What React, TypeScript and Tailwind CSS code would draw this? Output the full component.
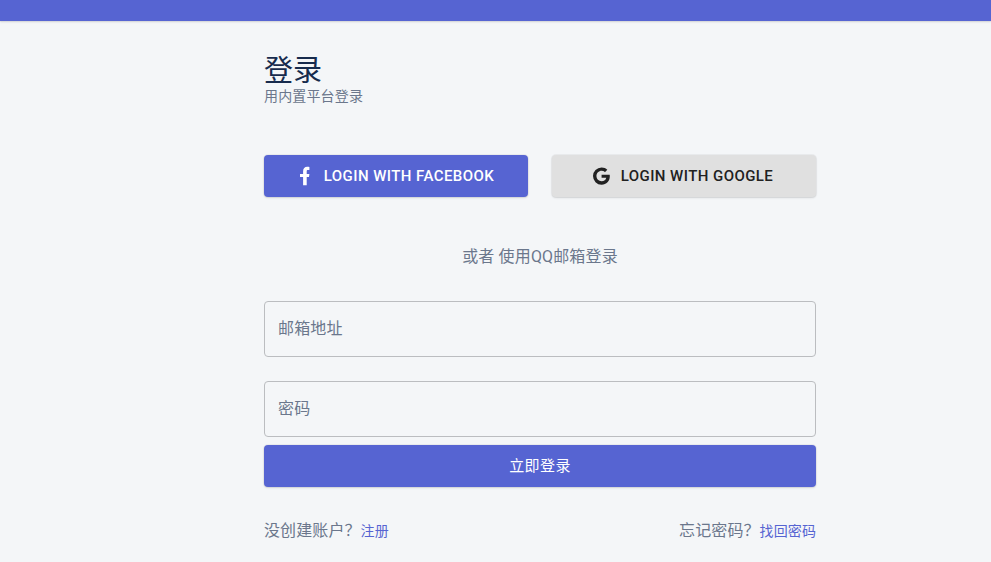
import React from "react";

function FacebookIcon() {
  return (
    <svg viewBox="0 0 24 24" className="h-6 w-6 fill-current">
      <path d="M17.4 3v3.1h-1.3c-1.1 0-1.4.5-1.4 1.4V9.900h2.7l-.4 3.100h-2.300V21.200h-3.600V13H8V9.900h3.100V7.200C11.100 4.400 12.700 2.800 15.200 2.800c.9 0 1.700.1 2.200.2z" />
    </svg>
  );
}

function GoogleIcon() {
  return (
    <svg viewBox="0 0 24 24" className="h-6 w-6 fill-current">
      <path d="M20.66 10.7c.1.5.15 1.02.15 1.56 0 4.9-3.28 8.38-8.23 8.38A8.57 8.57 0 0 1 4 12.07a8.57 8.57 0 0 1 8.58-8.57c2.31 0 4.25.85 5.73 2.23l-2.42 2.42v-.06c-.9-.86-2.04-1.3-3.31-1.3-2.83 0-5.13 2.39-5.13 5.22s2.3 5.23 5.13 5.23c2.56 0 4.31-1.47 4.67-3.49h-4.67V10.7h8.08z" />
    </svg>
  );
}

function Field({ label }: { label: string }) {
  return (
    <div className="flex h-14 items-center rounded-[4px] border border-[#bbbdc0] px-[13px] text-base tracking-[0.15px] text-[#6b778c]">
      {label}
    </div>
  );
}

const raised = "shadow-[0_0_0_1px_rgba(63,63,68,0.05),0_1px_2px_0_rgba(63,63,68,0.15)]";

export default function App() {
  return (
    <div className="h-[562px] overflow-hidden bg-[#f4f6f8] font-[Roboto,'Noto_Sans_CJK_SC',sans-serif] text-[#6b778c]">
      <header className={`h-[21px] bg-[#5664d2] ${raised}`} />
      <main className="ml-[264px] w-[552px] pt-[33px]">
        <h1 className="h-[34px] text-[29px] leading-[34px] text-[#172b4d]">登录</h1>
        <p className="text-sm leading-[17px] tracking-[0.15px]">用内置平台登录</p>
        <div className="mt-[50px] grid grid-cols-2 gap-6 text-[15px] font-medium tracking-[0.43px]">
          <button className={`flex h-[42px] items-center justify-center rounded-[4px] bg-[#5664d2] pr-1.5 text-white ${raised}`}>
            <FacebookIcon />
            <span className="ml-2">LOGIN WITH FACEBOOK</span>
          </button>
          <button className={`flex h-[42px] items-center justify-center rounded-[4px] bg-[#e0e0e0] pr-1.5 text-[#212121] ${raised}`}>
            <GoogleIcon />
            <span className="ml-2">LOGIN WITH GOOGLE</span>
          </button>
        </div>
        <p className="mt-12 h-6 text-center text-base leading-6 tracking-[0.15px]">或者 使用QQ邮箱登录</p>
        <div className="mt-8 flex flex-col gap-6">
          <Field label="邮箱地址" />
          <Field label="密码" />
        </div>
        <button className={`mt-2 h-[42px] w-full rounded-[4px] bg-[#5664d2] text-[15px] tracking-[0.43px] text-white ${raised}`}>立即登录</button>
        <div className="mt-8 flex justify-between text-base leading-6 tracking-[0.1px]">
          <p>没创建账户？<a className="text-sm text-[#5664d2]">注册</a></p>
          <p>忘记密码？<a className="text-sm text-[#5664d2]">找回密码</a></p>
        </div>
      </main>
    </div>
  );
}
